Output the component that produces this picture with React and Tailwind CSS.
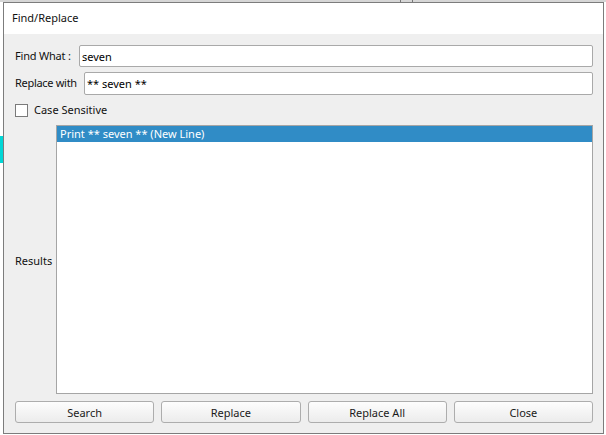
import React, { useState } from 'react';

const font = { fontFamily: '"Noto Sans", "Open Sans", sans-serif' };

const Button = ({ children }) => (
  <button
    type="button"
    className="h-[22px] flex-1 rounded-[3px] border border-[#adadad] bg-gradient-to-b from-[#fdfdfd] to-[#ececec] text-[11px] text-[#1a1a1a] leading-none"
  >
    {children}
  </button>
);

export default function App() {
  const [find, setFind] = useState('seven');
  const [replace, setReplace] = useState('** seven **');
  const [caseSensitive, setCaseSensitive] = useState(false);

  return (
    <div className="relative w-[606px] h-[435px] bg-white overflow-hidden" style={font}>
      {/* stuff behind the dialog */}
      <div className="absolute left-0 top-0 w-full h-[2px] bg-[#d6d6d6]" />
      <div className="absolute left-[400px] top-0 w-px h-[2px] bg-[#777]" />
      <div className="absolute left-[412px] top-0 w-px h-[2px] bg-[#777]" />
      <div className="absolute left-0 top-[136px] w-[3px] h-[27px] bg-[#00d7d7]" />

      {/* dialog */}
      <div className="absolute left-[3px] top-[2px] w-[601px] h-[432px] border border-[#7c7c7c] flex flex-col">
        <div className="h-[31px] bg-white flex items-center pl-[8px] text-[11px] text-[#111]">
          Find/Replace
        </div>
        <div className="flex-1 bg-[#efefef] flex flex-col pl-[11px] pr-[10px] pt-[11px] pb-[10px]">
          {/* Find What */}
          <div className="flex items-center h-[22px]">
            <label className="w-[64px] shrink-0 whitespace-nowrap text-[11px] tracking-[-0.2px] text-[#111]">Find What :</label>
            <input
              value={find}
              onChange={(e) => setFind(e.target.value)}
              className="flex-1 h-[22px] bg-white border border-[#a9a9a9] rounded-[2px] px-[2px] text-[11px] text-black outline-none"
            />
          </div>

          {/* Replace with */}
          <div className="flex items-center h-[23px] mt-[5px]">
            <label className="w-[69px] shrink-0 whitespace-nowrap text-[11px] tracking-[-0.3px] text-[#111]">Replace with</label>
            <input
              value={replace}
              onChange={(e) => setReplace(e.target.value)}
              className="flex-1 h-[23px] bg-white border border-[#a9a9a9] rounded-[2px] px-[2px] text-[11px] text-black outline-none"
            />
          </div>

          {/* Case sensitive */}
          <label className="flex items-center h-[14px] mt-[8px] cursor-pointer">
            <span
              onClick={() => setCaseSensitive(!caseSensitive)}
              className="w-[13px] h-[13px] bg-white border border-[#7a7a7a] flex items-center justify-center text-[10px]"
            >
              {caseSensitive ? '✓' : ''}
            </span>
            <span className="ml-[6px] text-[11px] text-[#111]">Case Sensitive</span>
          </label>

          {/* Results */}
          <div className="flex mt-[8px] h-[269px]">
            <div className="w-[41px] shrink-0 flex items-center pt-[3px] text-[11px] text-[#111]">Results</div>
            <div className="flex-1 bg-white border border-[#a5a5a5]">
              <div className="h-[16px] bg-[#308cc6] text-white text-[11px] leading-[16px] pl-[3px]">
                Print ** seven ** (New Line)
              </div>
            </div>
          </div>

          {/* Buttons */}
          <div className="flex gap-[7px] mt-[7px]">
            <Button>Search</Button>
            <Button>Replace</Button>
            <Button>Replace All</Button>
            <Button>Close</Button>
          </div>
        </div>
      </div>
    </div>
  );
}
